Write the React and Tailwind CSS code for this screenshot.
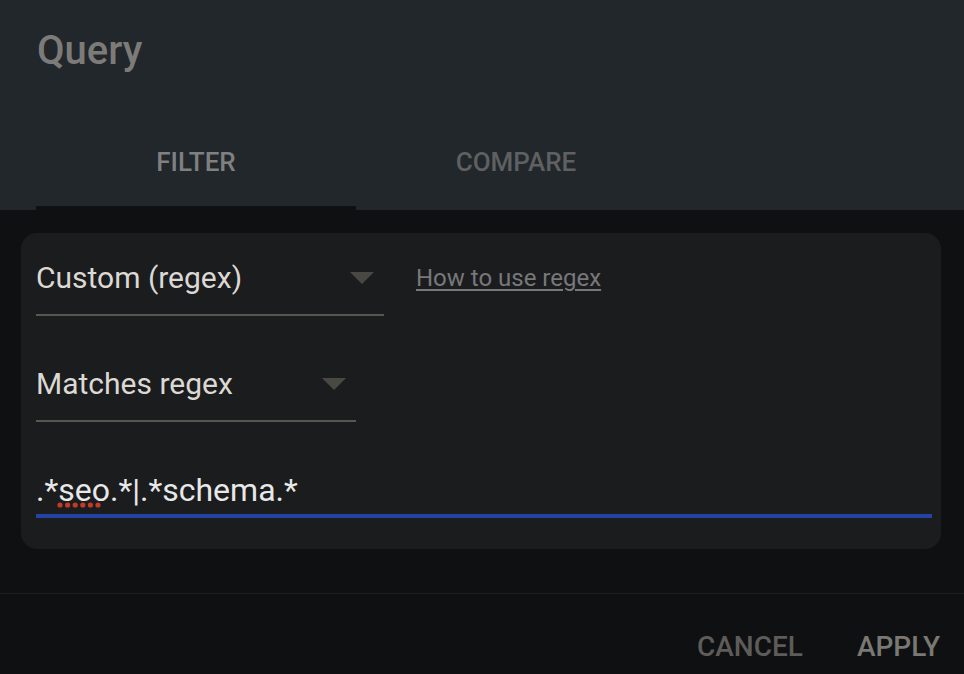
import React, { useState } from "react";

const font = { fontFamily: "Roboto, 'Noto Sans', sans-serif" };

function Select({ label, width }) {
    return (
        <div className={`${width} flex flex-col`}>
            <div className="h-[46px] flex items-center justify-between pr-[10px]">
                <span className="text-[30px] leading-[46px] text-[#dcd9d4]">{label}</span>
                <svg width="24" height="12" viewBox="0 0 24 12">
                    <path d="M0 0 L24 0 L12 12 Z" fill="#4a4843" />
                </svg>
            </div>
            <div className="mt-[13px] h-[2px] bg-[#59564f]" />
        </div>
    );
}

function SpellDots() {
    return (
        <svg
            className="absolute left-[-1px] top-[35px]"
            width="46"
            height="6"
            viewBox="0 0 46 6"
        >
            {[0, 1, 2, 3, 4, 5].map((i) => (
                <circle key={i} cx={3 + i * 7.6} cy="3" r="2.6" fill="#c23a28" />
            ))}
        </svg>
    );
}

export default function App() {
    const [tab, setTab] = useState("filter");

    return (
        <div className="w-[964px] h-[674px] flex flex-col bg-[#0e1012] overflow-hidden" style={font}>
            {/* header */}
            <div className="h-[210px] bg-[#21272a] flex flex-col justify-between">
                <h1 className="pt-[31px] pl-[37px] text-[40px] leading-[40px] font-medium text-[#7c7b79]">
                    Query
                </h1>
                <div className="flex px-[36px]">
                    {[
                        ["filter", "FILTER"],
                        ["compare", "COMPARE"],
                    ].map(([key, label]) => (
                        <button
                            key={key}
                            onClick={() => setTab(key)}
                            className="w-[320px] flex flex-col"
                        >
                            <span
                                className={`text-[26px] leading-[30px] font-medium ${
                                    tab === key ? "text-[#808080]" : "text-[#5e6062]"
                                }`}
                            >
                                {label}
                            </span>
                            <span
                                className={`mt-[29px] h-[4px] w-full ${
                                    tab === key ? "bg-[#0e1012]" : "bg-transparent"
                                }`}
                            />
                        </button>
                    ))}
                </div>
            </div>

            {/* body */}
            <div className="pt-[23px] pl-[21px] pr-[23px] pb-[44px] border-b border-[#1d1e20]">
                <div className="rounded-[16px] bg-[#1b1c1e] pl-[15px] pr-[9px] pt-[22px] pb-[31px] flex flex-col gap-[45px]">
                    <div className="flex items-start gap-[32px]">
                        <Select label="Custom (regex)" width="w-[348px]" />
                        <a className="text-[24px] leading-[46px] text-[#78787a] underline underline-offset-[3px] decoration-[2px]">
                            How to use regex
                        </a>
                    </div>
                    <Select label="Matches regex" width="w-[320px]" />
                    <div className="flex flex-col">
                        <div className="h-[46px] flex items-center text-[32px] leading-[46px] text-[#e8e8e8]">
                            <span>.*</span>
                            <span className="relative">
                                seo
                                <SpellDots />
                            </span>
                            <span>.*|.*schema.*</span>
                        </div>
                        <div className="mt-[1px] h-[4px] bg-[#2443a3]" />
                    </div>
                </div>
            </div>

            {/* footer */}
            <div className="flex-1 flex items-center justify-end gap-[54px] pt-[26px] pr-[24px]">
                <button className="text-[28px] leading-[32px] font-medium text-[#5d5c59]">CANCEL</button>
                <button className="text-[28px] leading-[32px] font-medium text-[#7a7873]">APPLY</button>
            </div>
        </div>
    );
}
